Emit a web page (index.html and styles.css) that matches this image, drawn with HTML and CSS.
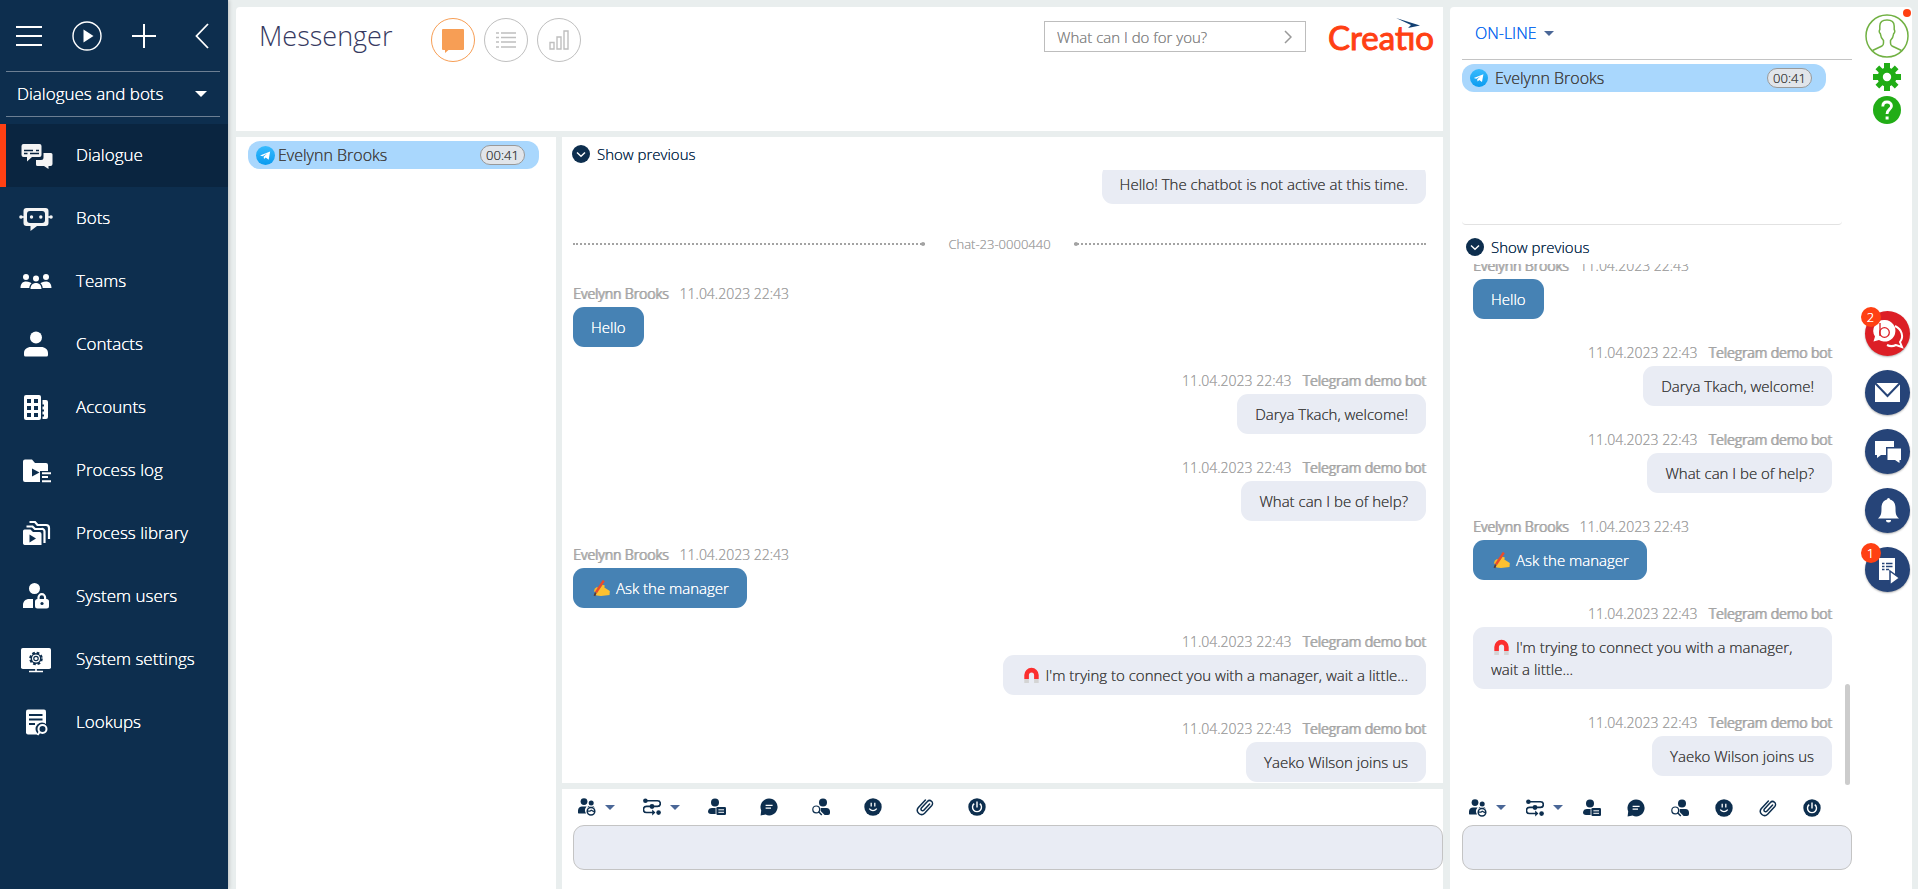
FILE: index.html
```html
<!DOCTYPE html>
<html lang="en">
<head>
<meta charset="utf-8">
<title>Messenger</title>
<link rel="stylesheet" href="styles.css">
</head>
<body>
<svg class="sprite" aria-hidden="true">
  <defs>
    <linearGradient id="tg" x1="0" y1="0" x2="0" y2="1"><stop offset="0" stop-color="#37bbfe"/><stop offset="1" stop-color="#0a9bef"/></linearGradient>
  </defs>
  <symbol id="telegram" viewBox="0 0 18 18"><circle cx="9" cy="9" r="9" fill="url(#tg)"/><path d="M3.8 9 13.4 5.2 12 13 9.2 11 7.6 12.4 7.2 10.2 10.6 7.2 6.2 9.8z" fill="#fff"/></symbol>
  <symbol id="down" viewBox="0 0 18 18"><circle cx="9" cy="9" r="9" fill="#0d2e4e"/><path d="M5 7.5 9 11.3 13 7.5" fill="none" stroke="#fff" stroke-width="1.4"/></symbol>
  <symbol id="caret" viewBox="0 0 10 5"><path d="M0 0H10L5 5z" fill="currentColor"/></symbol>
  <symbol id="t-transfer" viewBox="0 0 18 18"><g fill="currentColor"><circle cx="6" cy="3.6" r="3.4"/><circle cx="13.2" cy="5" r="2.5"/><path d="M0 15V12.5C0 10 2 8.6 4 8.6H8.6A5.5 5.5 0 0 0 8 15.5H.5z"/><path d="M10 8.2H15.5L17 9.8A6 6 0 0 0 9.600 9.500z"/></g><circle cx="13" cy="13.3" r="3.8" fill="none" stroke="currentColor" stroke-width="1.5"/><path d="M10 13.200H12L13.200 12.200 16 13.600" fill="none" stroke="currentColor" stroke-width="1.300"/></symbol>
  <symbol id="t-route" viewBox="0 0 18 18"><path d="M3 2.8H14.5a2.8 2.8 0 0 1 0 5.6H3.5a3 3 0 0 0 0 6.1H10" fill="none" stroke="currentColor" stroke-width="1.6"/><g fill="currentColor"><circle cx="2.4" cy="2.8" r="2.3"/><circle cx="9" cy="8.5" r="2.4"/><circle cx="15.6" cy="14.6" r="2.3"/><path d="M9.2 11.6 12.4 14.5 9.2 17.6z"/></g></symbol>
  <symbol id="t-card" viewBox="0 0 18 18"><g fill="currentColor"><circle cx="7" cy="4.4" r="4"/><path d="M0 13.5C0 11 2 9.900 4 9.900H7.6V16H3C1 16 0 15 0 13.5z"/><rect x="8.4" y="9" width="9.6" height="8" rx="1.2"/></g><path d="M10.4 11.8H16M10.4 14.3H16" stroke="#fff" stroke-width="1"/></symbol>
  <symbol id="t-chat" viewBox="0 0 18 18"><path d="M9.2 .6A8.4 8.4 0 1 1 5.6 16.6L.6 17.4 1.2 12.4A8.4 8.4 0 0 1 9.2 .6z" fill="currentColor"/><path d="M5.6 7.4H12.6M5.6 10.2H11" stroke="#fff" stroke-width="1.2"/></symbol>
  <symbol id="t-find" viewBox="0 0 18 18"><g fill="currentColor"><circle cx="11" cy="4.4" r="4"/><path d="M8.6 9.9H14.5C16.8 9.9 18 11.4 18 13.6V15A2 2 0 0 1 16 17H12.6L8.6 13z"/></g><circle cx="4.2" cy="11.4" r="3.4" fill="#fff" stroke="currentColor" stroke-width="1.2"/><path d="M6.6 13.8 9.8 17" stroke="currentColor" stroke-width="1.5"/></symbol>
  <symbol id="t-smile" viewBox="0 0 18 18"><circle cx="9" cy="9" r="8.7" fill="currentColor"/><path d="M7.200 4.8V8.4M10.800 4.8V8.4M5.2 10.6Q9 14.6 12.8 10.6" fill="none" stroke="#fff" stroke-width="1.3"/></symbol>
  <symbol id="t-clip" viewBox="0 0 18 18"><path d="M13.6 6 7.8 12.2A1.6 1.6 0 0 1 5.4 10L11.4 3.6A2.9 2.9 0 0 1 15.8 7.4L8.6 15.2A4.2 4.2 0 0 1 2.2 9.8L9.4 2" fill="none" stroke="currentColor" stroke-width="1.5" stroke-linecap="round"/></symbol>
  <symbol id="t-power" viewBox="0 0 18 18"><circle cx="9" cy="9" r="8.7" fill="currentColor"/><path d="M6.2 5.6A4.5 4.5 0 1 0 11.8 5.6M9 3.6V9.4" fill="none" stroke="#fff" stroke-width="1.4"/></symbol>
  <symbol id="hand" viewBox="0 0 17 17"><path d="M2 13.500 5 9.500 7.500 7.500 9.500 4.800 11.800 5.500 11.300 7.500 16.800 11 16.500 15 8 16 3.500 15.500z" fill="#fdc12f"/><path d="M1.800 8.500 4 7 6 8.500 3 12 .8 11.500z" fill="#f7b62b"/><path d="M10.800 .5 3 12.500" stroke="#ea4b2b" stroke-width="2.400"/><path d="M2.800 12.600 1.400 15.800" stroke="#5a3b35" stroke-width="1.8"/></symbol>
  <symbol id="magnet" viewBox="0 0 17 17"><path d="M3.6 12V8a4.9 4.9 0 0 1 9.8 0V12" fill="none" stroke="#fb2f2f" stroke-width="4.6"/><path d="M3.6 12V16M13.4 12V16" stroke="#d4d4d4" stroke-width="4.6"/></symbol>
</svg>

<div class="app">
  <nav class="sidebar" aria-label="Sections">
    <div class="quick">
      <button class="plain" aria-label="Menu"><svg width="26" height="22" viewBox="0 0 26 22"><path d="M0 2H26M0 11H26M0 20H26" stroke="#fff" stroke-width="2"/></svg></button>
      <button class="plain" aria-label="Run process"><svg width="30" height="30" viewBox="0 0 30 30"><circle cx="15" cy="15" r="14" fill="none" stroke="#fff" stroke-width="1.4"/><path d="M11.500 8.5 21.5 15 11.500 21.5z" fill="#fff"/></svg></button>
      <button class="plain" aria-label="Add"><svg width="24" height="24" viewBox="0 0 24 24"><path d="M0 12H24M12 0V24" stroke="#fff" stroke-width="2"/></svg></button>
      <button class="plain" aria-label="Collapse"><svg width="14" height="26" viewBox="0 0 14 26"><path d="M13 1 1.500 13 13 25" fill="none" stroke="#fff" stroke-width="1.800"/></svg></button>
    </div>
    <div class="workplace">
      <select aria-label="Workplace"><option>Dialogues and bots</option></select>
      <svg class="caret" width="12" height="6"><use href="#caret"/></svg>
    </div>
    <ul class="menu">
      <li><a href="#" class="active"><svg viewBox="0 0 34 34"><path d="M4.500 6H20.500a2 2 0 0 1 2 2V17a2 2 0 0 1-2 2H13L8 23.500V19H4.500a2 2 0 0 1-2-2V8a2 2 0 0 1 2-2z" fill="#f4f4f4"/><path d="M5 12.500H14M17 12.500H20M5 15.500H8.500M11 15.500H20" stroke="#0a2540" stroke-width="1.400"/><path d="M24.500 15H32a1.500 1.500 0 0 1 1.500 1.500V26a2 2 0 0 1-2 2H29.500V31L25 28H18.500a1.500 1.500 0 0 1-1.500-1.500V22H22a2.500 2.500 0 0 0 2.500-2.500z" fill="#f4f4f4"/></svg>Dialogue</a></li>
      <li><a href="#"><svg viewBox="0 0 34 34"><path d="M7.500 7H26.500a3 3 0 0 1 3 3V22a3 3 0 0 1-3 3H18L11.500 30V25H7.500a3 3 0 0 1-3-3V10a3 3 0 0 1 3-3z" fill="#f4f4f4"/><rect x="8" y="10" width="18" height="12" rx="3" fill="#0d2e4e"/><g fill="#f4f4f4"><circle cx="12.500" cy="16" r="1.700"/><circle cx="21.800" cy="16" r="1.700"/><circle cx="2" cy="16" r="1.800"/><circle cx="32" cy="16" r="1.800"/><path d="M2 15.200H6V16.800H2zM28 15.200H32V16.800H28z"/></g></svg>Bots</a></li>
      <li><a href="#"><svg viewBox="0 0 34 34" fill="#fff"><circle cx="7" cy="13" r="3"/><circle cx="27" cy="13" r="3"/><circle cx="17" cy="14.500" r="3"/><path d="M1.500 24C1.500 19.500 4 17.500 7 17.500S12 18.500 12.500 19.500C11 20.500 10.500 22 10.300 24zM32.500 24C32.500 19.500 30 17.500 27 17.500S22 18.500 21.500 19.500C23 20.500 23.500 22 23.700 24zM11.500 25C11.500 21 14 19 17 19S22.500 21 22.500 25z"/></svg>Teams</a></li>
      <li><a href="#"><svg viewBox="0 0 34 34" fill="#fff"><circle cx="17" cy="10.500" r="6"/><path d="M5 28V26C5 22.500 8 20 12 20H22C26 20 29 22.500 29 26V28a1.500 1.500 0 0 1-1.500 1.500H6.500A1.500 1.500 0 0 1 5 28z"/></svg>Contacts</a></li>
      <li><a href="#"><svg viewBox="0 0 34 34"><rect x="5" y="5" width="17" height="25" rx="2" fill="#fff"/><path d="M8 9h4v4H8zM15 9h4v4h-4zM8 16h4v4H8zM15 16h4v4h-4zM8 23h4v4H8zM15 23h4v4h-4z" fill="#0d2e4e"/><path d="M23.500 10H27a2 2 0 0 1 2 2V27a2 2 0 0 1-2 2H23.500V26.500H25V24.500H23.500V21.500H25V19.500H23.500V16.500H25V14.500H23.500z" fill="#fff"/></svg>Accounts</a></li>
      <li><a href="#"><svg viewBox="0 0 34 34"><path d="M6 6.500H13L16 10H27A2 2 0 0 1 29 12V18H21V29H6A2 2 0 0 1 4 27V8.500A2 2 0 0 1 6 6.500z" fill="#fff"/><path d="M13 15.500 20.500 19.500 13 23.500z" fill="#0d2e4e"/><path d="M23 20.200H32M23 24H29M23 28.300H32" stroke="#fff" stroke-width="2"/></svg>Process log</a></li>
      <li><a href="#"><svg viewBox="0 0 34 34"><path d="M5.500 13.500H11.500L14 16H20.500A2 2 0 0 1 22.500 18V29H5.500A2 2 0 0 1 4 27.500V15a1.500 1.500 0 0 1 1.500-1.500z" fill="#fff"/><path d="M10.500 18.500 17 22.500 10.500 26.500z" fill="#0d2e4e"/><path d="M7.500 10.500H13.500L16 13H22.500A2.500 2.500 0 0 1 25.500 15.500V27M10.500 6H16L18.500 9H27A3 3 0 0 1 30 12V23" fill="none" stroke="#fff" stroke-width="2.200"/></svg>Process library</a></li>
      <li><a href="#"><svg viewBox="0 0 34 34"><circle cx="15.500" cy="9.500" r="5.500" fill="#fff"/><path d="M4 29V26C4 22 7 20 10 20H14V29z" fill="#fff"/><path d="M19.500 21V18.500a3.300 3.300 0 0 1 6.600 0V21" fill="none" stroke="#fff" stroke-width="2.200"/><rect x="16" y="20" width="14" height="9.500" rx="2.500" fill="#fff"/><circle cx="23" cy="24.500" r="1.600" fill="#0d2e4e"/></svg>System users</a></li>
      <li><a href="#"><svg viewBox="0 0 34 34"><rect x="2" y="6" width="30" height="21" rx="1.800" fill="#fff"/><path d="M10 29.500H24M17 27V30" stroke="#fff" stroke-width="1.600"/><circle cx="17" cy="16.500" r="5.600" fill="none" stroke="#0d2e4e" stroke-width="2.400" stroke-dasharray="2.600 1.798"/><circle cx="17" cy="16.500" r="4.700" fill="none" stroke="#0d2e4e" stroke-width="1.400"/><circle cx="17" cy="16.500" r="2.200" fill="none" stroke="#0d2e4e" stroke-width="1.200"/></svg>System settings</a></li>
      <li><a href="#"><svg viewBox="0 0 34 34"><rect x="7" y="4.500" width="20" height="25" rx="2" fill="#fff"/><path d="M10 10H23.500M10 14.500H23.500M10 19H16" stroke="#0d2e4e" stroke-width="1.800"/><circle cx="23" cy="24" r="6.500" fill="#0d2e4e"/><circle cx="23.500" cy="24" r="4" fill="none" stroke="#fff" stroke-width="2"/><path d="M20.800 26.800 18.500 30" stroke="#fff" stroke-width="2"/></svg>Lookups</a></li>
    </ul>
  </nav>

  <main class="main">
    <header class="head card">
      <h1>Messenger</h1>
      <div class="views">
        <button class="view on" aria-label="Chats"><svg width="24" height="26" viewBox="0 0 24 26"><path d="M2 2H22a1 1 0 0 1 1 1V22a1 1 0 0 1-1 1H7.500L4 26V23H2a1 1 0 0 1-1-1V3a1 1 0 0 1 1-1z" fill="currentColor"/></svg></button>
        <button class="view" aria-label="List"><svg width="20" height="18" viewBox="0 0 20 18"><path d="M0 2H3M5 2H20M0 6.500H3M5 6.500H20M0 11H3M5 11H20M0 16H3M5 16H20" stroke="currentColor" stroke-width="1.500"/></svg></button>
        <button class="view" aria-label="Analytics"><svg width="20" height="20" viewBox="0 0 20 20"><path d="M1 12.500H5V19H1zM8 7H12V19H8zM15 1H19V19H15z" fill="none" stroke="currentColor" stroke-width="1.400"/></svg></button>
      </div>
      <div class="search">
        <input type="text" aria-label="Command line" placeholder="What can I do for you?">
        <button class="plain" aria-label="Run"><svg width="8" height="14" viewBox="0 0 8 14"><path d="M1 1 7 7 1 13" fill="none" stroke="#999" stroke-width="1.500"/></svg></button>
      </div>
      <a class="logo" href="#" aria-label="Creatio">Creatıo<svg class="bird" width="24" height="10" viewBox="0 0 24 10"><path d="M0 0 24 7.500 12 10 15 7z" fill="#124072"/></svg></a>
    </header>

    <section class="dialogs card" aria-label="Dialogues">
      <button class="dialog"><svg width="19" height="19"><use href="#telegram"/></svg><span class="who">Evelynn Brooks</span><span class="timer">00:41</span></button>
    </section>

    <section class="chat card" aria-label="Chat">
      <button class="previous"><svg width="18" height="18"><use href="#down"/></svg>Show previous</button>
      <div class="log">
        <article class="msg out"><p>Hello! The chatbot is not active at this time.</p></article>
        <div class="divider"><i></i><span>Chat-23-0000440</span><i></i></div>
        <article class="msg in"><header><b>Evelynn Brooks</b><time>11.04.2023 22:43</time></header><p>Hello</p></article>
        <article class="msg out"><header><time>11.04.2023 22:43</time><b>Telegram demo bot</b></header><p>Darya Tkach, welcome!</p></article>
        <article class="msg out"><header><time>11.04.2023 22:43</time><b>Telegram demo bot</b></header><p>What can I be of help?</p></article>
        <article class="msg in"><header><b>Evelynn Brooks</b><time>11.04.2023 22:43</time></header><p><svg class="emoji" role="img" aria-label="writing hand"><use href="#hand"/></svg> Ask the manager</p></article>
        <article class="msg out"><header><time>11.04.2023 22:43</time><b>Telegram demo bot</b></header><p><svg class="emoji" role="img" aria-label="magnet"><use href="#magnet"/></svg> I'm trying to connect you with a manager, wait a little...</p></article>
        <article class="msg out"><header><time>11.04.2023 22:43</time><b>Telegram demo bot</b></header><p>Yaeko Wilson joins us</p></article>
      </div>
    </section>

    <section class="composer card" aria-label="Reply">
      <div class="tools">
        <button class="tool drop" aria-label="Transfer"><svg><use href="#t-transfer"/></svg><svg class="caret"><use href="#caret"/></svg></button>
        <button class="tool drop" aria-label="Run process"><svg><use href="#t-route"/></svg><svg class="caret"><use href="#caret"/></svg></button>
        <button class="tool" aria-label="Contact card"><svg><use href="#t-card"/></svg></button>
        <button class="tool" aria-label="Quick replies"><svg><use href="#t-chat"/></svg></button>
        <button class="tool" aria-label="Find contact"><svg><use href="#t-find"/></svg></button>
        <button class="tool" aria-label="Emoji"><svg><use href="#t-smile"/></svg></button>
        <button class="tool" aria-label="Attach"><svg><use href="#t-clip"/></svg></button>
        <button class="tool" aria-label="Close chat"><svg><use href="#t-power"/></svg></button>
      </div>
      <textarea aria-label="Message"></textarea>
    </section>
  </main>

  <aside class="side card">
    <div class="panel">
      <div class="status"><select aria-label="Status"><option>ON-LINE</option></select><svg class="caret" width="10" height="5"><use href="#caret"/></svg></div>
      <div class="queue">
        <button class="dialog"><svg width="18" height="18"><use href="#telegram"/></svg><span class="who">Evelynn Brooks</span><span class="timer">00:41</span></button>
      </div>
      <button class="previous"><svg width="18" height="18"><use href="#down"/></svg>Show previous</button>
      <div class="log">
        <article class="msg in"><header><b>Evelynn Brooks</b><time>11.04.2023 22:43</time></header><p>Hello</p></article>
        <article class="msg out"><header><time>11.04.2023 22:43</time><b>Telegram demo bot</b></header><p>Darya Tkach, welcome!</p></article>
        <article class="msg out"><header><time>11.04.2023 22:43</time><b>Telegram demo bot</b></header><p>What can I be of help?</p></article>
        <article class="msg in"><header><b>Evelynn Brooks</b><time>11.04.2023 22:43</time></header><p><svg class="emoji" role="img" aria-label="writing hand"><use href="#hand"/></svg> Ask the manager</p></article>
        <article class="msg out"><header><time>11.04.2023 22:43</time><b>Telegram demo bot</b></header><p><svg class="emoji" role="img" aria-label="magnet"><use href="#magnet"/></svg> I'm trying to connect you with a manager, wait a little...</p></article>
        <article class="msg out"><header><time>11.04.2023 22:43</time><b>Telegram demo bot</b></header><p>Yaeko Wilson joins us</p></article>
        <span class="thumb"></span>
      </div>
      <div class="tools">
        <button class="tool drop" aria-label="Transfer"><svg><use href="#t-transfer"/></svg><svg class="caret"><use href="#caret"/></svg></button>
        <button class="tool drop" aria-label="Run process"><svg><use href="#t-route"/></svg><svg class="caret"><use href="#caret"/></svg></button>
        <button class="tool" aria-label="Contact card"><svg><use href="#t-card"/></svg></button>
        <button class="tool" aria-label="Quick replies"><svg><use href="#t-chat"/></svg></button>
        <button class="tool" aria-label="Find contact"><svg><use href="#t-find"/></svg></button>
        <button class="tool" aria-label="Emoji"><svg><use href="#t-smile"/></svg></button>
        <button class="tool" aria-label="Attach"><svg><use href="#t-clip"/></svg></button>
        <button class="tool" aria-label="Close chat"><svg><use href="#t-power"/></svg></button>
      </div>
      <textarea aria-label="Message"></textarea>
    </div>
    <div class="rail">
      <div class="account">
        <button class="plain avatar" aria-label="Profile"><svg width="44" height="44" viewBox="0 0 44 44" fill="none" stroke="#71b143" stroke-width="1.500"><circle cx="22" cy="22" r="21"/><path d="M7.500 36.500 17 32Q18.500 31 18.500 29V26.500C16 24 15.500 21.500 15.300 19.500 14 19 14 16.500 14.800 15.500V12C14.800 8 17 6 22 6S29.200 8 29.200 12V15.500C30 16.500 30 19 28.700 19.500 28.500 21.500 28 24 25.500 26.500V29Q25.500 31 27 32L36.500 36.500"/></svg><span class="dot"></span></button>
        <button class="plain" aria-label="Settings"><svg width="28" height="28" viewBox="0 0 28 28"><g fill="#21ad16"><circle cx="14" cy="14" r="9.500"/><path d="M11 0H17V28H11zM0 11H28V17H0z"/><path d="M6.200 2.500 25.500 21.800 21.800 25.500 2.500 6.200zM21.800 2.500 25.500 6.200 6.200 25.500 2.500 21.800z"/></g><circle cx="14" cy="14" r="4.200" fill="#fff"/></svg></button>
        <button class="plain" aria-label="Help"><svg width="28" height="28" viewBox="0 0 28 28"><circle cx="14" cy="14" r="14" fill="#21ad16"/><path d="M9.800 10.500C9.800 7.500 11.500 6 14 6S18.500 7.500 18.500 10C18.500 13 14 13.500 14 18" fill="none" stroke="#fff" stroke-width="2.800"/><path d="M12.600 20.500H15.600V23.500H12.600z" fill="#fff"/></svg></button>
      </div>
      <div class="channels">
        <button class="channel red" aria-label="Calls"><svg viewBox="0 0 45 45"><path d="M30 15C37 18 39 26 35 31L37 36 31 34C27 36 24 35 22 34" fill="none" stroke="#fff" stroke-width="2"/><path d="M20 9a10.800 10.800 0 1 1-6 20L8.500 30.500 10 25.500A10.800 10.800 0 0 1 20 9z" fill="#fff"/><path d="M15 12V25" stroke="#dc1f26" stroke-width="1.300"/><circle cx="19.500" cy="21.500" r="4.800" fill="none" stroke="#dc1f26" stroke-width="1.300"/></svg><span class="badge">2</span></button>
        <button class="channel" aria-label="Email"><svg viewBox="0 0 45 45"><path d="M10 13H35V32H10z" fill="#fff"/><path d="M10 13 22.500 26 35 13" fill="none" stroke="#264478" stroke-width="2"/></svg></button>
        <button class="channel" aria-label="Feed"><svg viewBox="0 0 45 45"><path d="M10 12H29V18H21V26H16L12 29V26H10z" fill="#fff"/><path d="M22.500 19.500H36V31H34.500V34L30 31H22.500z" fill="#fff"/></svg></button>
        <button class="channel" aria-label="Notifications"><svg viewBox="0 0 45 45"><path d="M23.500 10a1.500 1.500 0 0 1 1.500 1.500C29 12.500 30.500 16 30.500 20 30.500 26 31 27.500 34 30.500H13C16 27.500 16.500 26 16.500 20 16.500 16 18 12.500 22 11.500A1.500 1.500 0 0 1 23.500 10z" fill="#fff"/><path d="M21 32H26A2.500 2.500 0 0 1 21 32z" fill="#fff"/></svg></button>
        <button class="channel" aria-label="Process tasks"><svg viewBox="0 0 45 45"><path d="M14 11H30V33H14z" fill="#fff"/><path d="M17 16.500H19.500M21 16.500H27.500M17 19.500H19.500M21 19.500H27.500M17 22.500H19.500M21 22.500H24" stroke="#264478" stroke-width="1.300"/><path d="M25 24 34.500 31 25 38z" fill="#fff" stroke="#264478" stroke-width="1.500"/></svg><span class="badge">1</span></button>
      </div>
    </div>
  </aside>
</div>
</body>
</html>
```
FILE: styles.css
```css
* { box-sizing: border-box; }
/* The zero-offset shadow gives the light face a little more weight on screen. */
body { margin: 0; background: #e9eeee; color: #444; font: 300 15px/22px "Open Sans", "Noto Sans", sans-serif; text-shadow: 0 0 currentColor; }
button, select, input, textarea { font: inherit; color: inherit; text-shadow: inherit; }
button, select { border: 0; padding: 0; background: none; cursor: pointer; }
svg { display: block; flex: none; }
h1, p, ul { margin: 0; padding: 0; }
.sprite { position: absolute; width: 0; height: 0; }
.plain { display: block; }
.card { background: #fff; }

.app { display: flex; height: 100vh; min-height: 640px; }

/* Sidebar */
.sidebar { width: 228px; flex: none; background: #0d2e4e; color: #fff; box-shadow: 1px 0 4px rgba(0, 0, 0, .2); font-size: 17px; }
.quick { display: flex; align-items: center; gap: 30px; height: 71px; padding: 0 19px 0 16px; }
.quick button:last-child { margin-left: auto; }
.workplace { display: flex; align-items: center; justify-content: space-between; height: 46px; margin: 0 8px 7px 6px; padding: 0 13px 0 11px; border: solid #6c7f93; border-width: 1px 0; }
select { appearance: none; outline: 0; }
.workplace select { flex: 1; background: #0d2e4e; }
.menu { list-style: none; }
.menu a { display: flex; align-items: center; gap: 23px; height: 63px; padding: 0 0 2px 19px; color: #fff; text-decoration: none; }
.menu svg { width: 34px; height: 34px; }
.menu .active { background: #0a2540; border-left: 6px solid #ff4013; padding-left: 13px; }

/* Main area */
.main { flex: 1; min-width: 0; display: grid; grid-template: 124px minmax(0, 1fr) 100px / 320px minmax(0, 1fr); gap: 6px; margin: 7px 7px 0 8px; }
.head { grid-column: 1 / 3; display: flex; align-items: flex-start; padding: 8px 9px 0 23px; border-radius: 4px 0 0; }
.head h1 { font-size: 27px; line-height: 42px; font-weight: 300; color: #36395f; text-shadow: none; }
.views { display: flex; gap: 9px; margin: 3px auto 0 39px; }
.view { display: grid; place-items: center; width: 44px; height: 44px; border: 1px solid #bfbfbf; border-radius: 50%; color: #bfbfbf; }
.view.on { border-color: #f79e55; color: #f79e55; }
.search { display: flex; align-items: center; width: 262px; height: 31px; margin-top: 6px; padding: 0 13px 0 12px; border: 1px solid #bdbdbd; }
.search input { flex: 1; min-width: 0; border: 0; padding: 0; outline: 0; }
.search input::placeholder { color: #888; opacity: 1; }
.logo { position: relative; margin: 3px 0 0 22px; color: #ff4013; font: 400 33px/38px Lato, sans-serif; -webkit-text-stroke: 1px #ff4013; text-decoration: none; text-shadow: none; }
.bird { position: absolute; right: 14px; top: 0; }

.dialogs { grid-row: 2 / 4; padding: 4px 17px 0 12px; }
.dialog { display: flex; align-items: center; width: 100%; height: 28px; padding: 0 14px 0 8px; border-radius: 12px; background: #a9d7fd; text-align: left; }
.who { flex: 1; margin-left: 3px; font-size: 16px; }
.timer { width: 45px; height: 20px; border: 1px solid #999; border-radius: 10px; background: #e1e5ea; font-size: 13px; line-height: 18px; text-align: center; }

.chat { display: flex; flex-direction: column; min-height: 0; }
.previous { display: flex; align-items: center; align-self: flex-start; flex: none; gap: 7px; height: 33px; padding: 0 10px; color: #0d2e4e; }
.log { position: relative; flex: 1; min-height: 0; overflow: hidden; display: flex; flex-direction: column; justify-content: flex-end; gap: 24px; padding: 0 17px 1px 11px; }
.msg { flex: none; display: flex; flex-direction: column; align-items: flex-start; }
.msg.out { align-items: flex-end; }
.msg header { display: flex; gap: 11px; height: 20px; margin-bottom: 3px; color: #a3a3a3; font-size: 14px; line-height: 20px; }
.msg b { font-weight: 300; text-shadow: 0 0 currentColor, 1px 0 currentColor; }
.msg p { padding: 9px 18px; border-radius: 11px; background: #e9ecf4; }
.msg.in p { background: #4682b4; color: #fff; }
.emoji { display: inline-block; width: 17px; height: 17px; margin: 0 2px; vertical-align: -3px; }
.divider { flex: none; display: flex; align-items: center; gap: 23px; height: 32px; color: #a3a3a3; font-size: 13px; }
.divider i { position: relative; flex: 1; border-top: 2px dotted #a3a3a3; }
.divider i::after { content: ""; position: absolute; top: -3px; right: 0; width: 4px; height: 4px; border-radius: 50%; background: #a3a3a3; }
.divider i:last-child::after { right: auto; left: 0; }

.composer { padding-left: 11px; }
.tools { display: flex; align-items: center; gap: 28px; height: 36px; padding-left: 5px; color: #0d2e4e; }
.tool { display: flex; align-items: center; justify-content: space-between; width: 24px; height: 18px; }
.tool.drop { width: 37px; }
.tool svg { width: 18px; height: 18px; }
.tool .caret { width: 10px; height: 5px; color: #4a6797; }
textarea { display: block; width: 100%; height: 45px; padding: 10px 16px; border: 1px solid #c4c4c4; border-radius: 11px; background: #e9ecf4; resize: none; outline: 0; }

/* Communication panel */
.side { display: flex; flex: none; width: 462px; margin: 7px 6px 0 0; padding-left: 12px; border-radius: 4px 4px 0 0; }
.panel { display: flex; flex-direction: column; width: 390px; padding-bottom: 19px; }
.status { display: flex; align-items: center; gap: 7px; height: 53px; padding-left: 13px; border-bottom: 1px solid #c4c4c4; color: #4a6797; }
.status select { color: #0d6bef; font-size: 16px; }
.queue { flex: none; height: 165px; margin-right: 10px; padding: 4px 16px 0 0; border-bottom: 1px solid #e2e2e2; border-radius: 4px; }
.queue .who { margin-left: 7px; }
.panel .previous { height: 39px; padding: 5px 4px 0; }
.panel .log { padding: 0 20px 9px 11px; }
.panel .tools { gap: 20px; height: 40px; padding: 5px 0 0 7px; }
.thumb { position: absolute; right: 2px; bottom: 0; width: 5px; height: 101px; border-radius: 3px; background: #ccc; }

.rail { display: flex; flex-direction: column; align-items: center; flex: 1; padding: 7px 0 0 10px; }
.account { display: grid; justify-items: center; gap: 5px; flex: none; }
.avatar { position: relative; }
.dot { position: absolute; top: -5px; right: -2px; width: 8px; height: 8px; border-radius: 50%; background: #ff4013; }
.channels { display: grid; gap: 14px; margin-top: 187px; }
.channel { position: relative; width: 45px; height: 45px; border-radius: 50%; background: #264478; box-shadow: 0 1px 2px rgba(0, 0, 0, .3); }
.channel.red { background: #dc1f26; }
.badge { position: absolute; top: -4px; left: -4px; width: 20px; height: 20px; border-radius: 50%; background: #ff4013; color: #fff; font-size: 13px; line-height: 20px; text-align: center; }
```
